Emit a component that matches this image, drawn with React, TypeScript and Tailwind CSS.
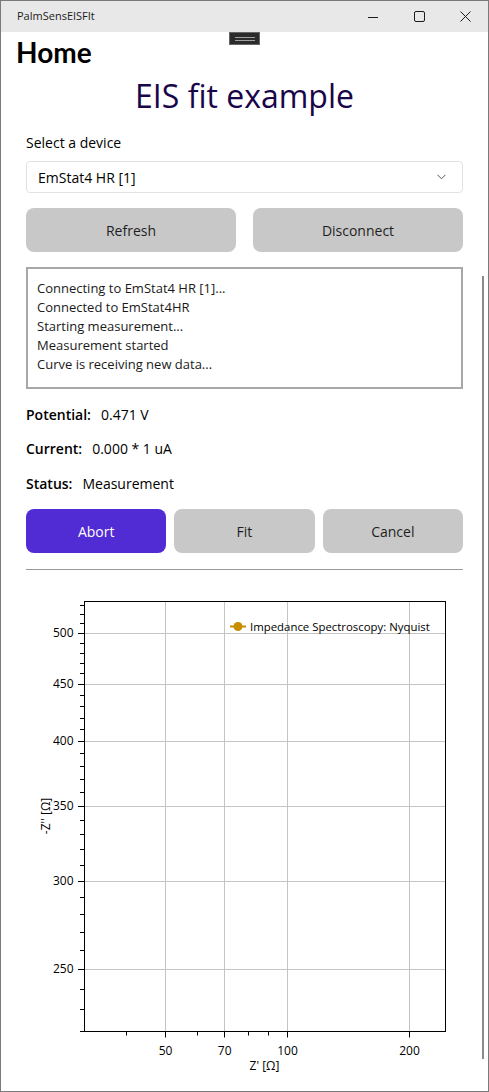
import React from "react";

const OX = 26;
const OY = 570;
const yv = (v: number) => 633 + 1116.2 * Math.log10(500 / v) - OY;
const xv = (v: number) => 287 + 405.3 * Math.log10(v / 100) - OX;
const L = 84 - OX + 0.5;
const R = 445 - OX + 0.5;
const T = 601 - OY + 0.5;
const B = 1031 - OY + 0.5;
const snap = (n: number) => Math.round(n) + 0.5;

const yMajor = [250, 300, 350, 400, 450, 500];
const yMinor: number[] = [];
for (let v = 220; v <= 530; v += 10) if (!yMajor.includes(v)) yMinor.push(v);
const xMajor = [50, 70, 100, 200];
const xMinor = [40, 60, 80, 90];

function Chart() {
  const font = "'Open Sans', sans-serif";
  return (
    <svg width={437} height={521} className="block" style={{ fontFamily: font }}>
      {/* grid */}
      {yMajor.map((v) => (
        <line key={"gy" + v} x1={L} x2={R} y1={snap(yv(v))} y2={snap(yv(v))} stroke="#c4c4c4" strokeWidth={1} />
      ))}
      {xMajor.map((v) => (
        <line key={"gx" + v} y1={T} y2={B} x1={snap(xv(v))} x2={snap(xv(v))} stroke="#c4c4c4" strokeWidth={1} />
      ))}
      {/* plot border */}
      <rect x={L} y={T} width={R - L} height={B - T} fill="none" stroke="#000" strokeWidth={1} />
      {/* y ticks */}
      {yMajor.map((v) => (
        <line key={"ty" + v} x1={L - 6.5} x2={L} y1={snap(yv(v))} y2={snap(yv(v))} stroke="#000" strokeWidth={1} />
      ))}
      {yMinor.map((v) => (
        <line key={"tym" + v} x1={L - 4.5} x2={L} y1={snap(yv(v))} y2={snap(yv(v))} stroke="#000" strokeWidth={1} />
      ))}
      {yMajor.map((v) => (
        <text key={"ly" + v} x={73.5 - OX} y={yv(v) + 4.3} textAnchor="end" fontSize={12} fill="#000">
          {v}
        </text>
      ))}
      {/* x ticks */}
      {xMajor.map((v) => (
        <line key={"tx" + v} y1={B} y2={B + 6} x1={snap(xv(v))} x2={snap(xv(v))} stroke="#000" strokeWidth={1} />
      ))}
      {xMinor.map((v) => (
        <line key={"txm" + v} y1={B} y2={B + 4} x1={snap(xv(v))} x2={snap(xv(v))} stroke="#000" strokeWidth={1} />
      ))}
      {xMajor.map((v) => (
        <text key={"lx" + v} x={xv(v) + 0.5} y={1054.5 - OY} textAnchor="middle" fontSize={12} fill="#000">
          {v}
        </text>
      ))}
      {/* axis titles */}
      <text x={264.5 - OX} y={1070 - OY} textAnchor="middle" fontSize={12} fill="#000">
        Z' [Ω]
      </text>
      <text
        x={0}
        y={0}
        transform={`translate(${50 - OX}, ${816 - OY}) rotate(-90)`}
        textAnchor="middle"
        fontSize={12}
        fill="#000"
      >
        -Z'' [Ω]
      </text>
      {/* legend */}
      <line x1={230 - OX} x2={246 - OX} y1={626.5 - OY} y2={626.5 - OY} stroke="#C88D00" strokeWidth={2} />
      <circle cx={238 - OX} cy={626.5 - OY} r={4.5} fill="#C88D00" />
      <text x={250 - OX} y={630.5 - OY} fontSize={11.4} fill="#000">
        Impedance Spectroscopy: Nyquist
      </text>
    </svg>
  );
}

function TitleBar() {
  return (
    <div className="h-[31px] shrink-0 bg-[#e8e8e8] flex items-center">
      <span className="ml-[16px] text-[11px] text-[#1b1b1b] font-['Open_Sans',sans-serif]">PalmSensEISFIt</span>
      <div className="ml-auto flex h-full">
        <div className="w-[46px] h-full flex items-center justify-center">
          <svg width="10" height="10" viewBox="0 0 10 10">
            <line x1="0" x2="10" y1="5.5" y2="5.5" stroke="#1b1b1b" strokeWidth="1" />
          </svg>
        </div>
        <div className="w-[46px] h-full flex items-center justify-center">
          <svg width="11" height="11" viewBox="0 0 11 11">
            <rect x="0.5" y="0.5" width="10" height="10" rx="1.5" fill="none" stroke="#1b1b1b" strokeWidth="1" />
          </svg>
        </div>
        <div className="w-[46px] h-full flex items-center justify-center">
          <svg width="11" height="11" viewBox="0 0 11 11">
            <path d="M0.5 0.5 L10.5 10.5 M10.5 0.5 L0.5 10.5" stroke="#1b1b1b" strokeWidth="1" />
          </svg>
        </div>
      </div>
    </div>
  );
}

export default function App() {
  return (
    <div className="w-[489px] h-[1092px] border border-[#7a7a7a] bg-white relative overflow-hidden flex flex-col font-['Open_Sans',sans-serif] text-black">
      <TitleBar />
      {/* grip */}
      <div className="absolute left-[228px] top-[31px] w-[31px] h-[13px] bg-[#2b2b2b] border border-[#666] flex flex-col items-center justify-center gap-[2px]">
        <div className="w-[20px] h-px bg-[#a0a0a0]" />
        <div className="w-[20px] h-px bg-[#a0a0a0]" />
      </div>
      {/* scrollbar */}
      <div className="absolute left-[481px] top-[275px] w-[2px] h-[783px] bg-[#8a8a8a]" />

      <div className="pl-[15px] h-[40px] leading-[40px] text-[28px] font-bold font-['Lato',sans-serif]">Home</div>

      <div className="px-[25px] flex flex-col">
        <div className="h-[48px] leading-[48px] text-[32px] text-center text-[#190649]">EIS fit example</div>
        <div className="mt-[13px] h-[20px] leading-[20px] text-[14px]">Select a device</div>
        <div className="mt-[8px] h-[32px] border border-[#e2e2e2] rounded-[4px] flex items-center pl-[11px] pr-[16px] text-[14px]">
          <span>EmStat4 HR [1]</span>
          <svg className="ml-auto" width="9" height="6" viewBox="0 0 9 6">
            <path d="M0.5 0.8 L4.5 4.8 L8.5 0.8" fill="none" stroke="#555" strokeWidth="1" />
          </svg>
        </div>
        <div className="mt-[15px] grid grid-cols-2 gap-[17px]">
          <div className="h-[44px] rounded-[8px] bg-[#c8c8c8] flex items-center justify-center text-[14px] text-[#1f1f1f]">Refresh</div>
          <div className="h-[44px] rounded-[8px] bg-[#c8c8c8] flex items-center justify-center text-[14px] text-[#1f1f1f]">Disconnect</div>
        </div>
        <div className="mt-[15px] h-[122px] border-2 border-[#a8a8a8] pt-[10px] pl-[9px] text-[13px] leading-[19px] text-[#1a1a1a]">
          <div>Connecting to EmStat4 HR [1]...</div>
          <div>Connected to EmStat4HR</div>
          <div>Starting measurement...</div>
          <div>Measurement started</div>
          <div>Curve is receiving new data...</div>
        </div>
        <div className="mt-[16px] h-[20px] leading-[20px] text-[14px] flex gap-[10px]">
          <span className="font-semibold">Potential:</span>
          <span>0.471 V</span>
        </div>
        <div className="mt-[14px] h-[20px] leading-[20px] text-[14px] flex gap-[10px]">
          <span className="font-semibold">Current:</span>
          <span>0.000 * 1 uA</span>
        </div>
        <div className="mt-[15px] h-[20px] leading-[20px] text-[14px] flex gap-[10px]">
          <span className="font-semibold">Status:</span>
          <span>Measurement</span>
        </div>
        <div className="mt-[15px] grid grid-cols-3 gap-[8px]">
          <div className="h-[44px] rounded-[8px] bg-[#512bd4] flex items-center justify-center text-[14px] text-white">Abort</div>
          <div className="h-[44px] rounded-[8px] bg-[#c8c8c8] flex items-center justify-center text-[14px] text-[#1f1f1f]">Fit</div>
          <div className="h-[44px] rounded-[8px] bg-[#c8c8c8] flex items-center justify-center text-[14px] text-[#1f1f1f]">Cancel</div>
        </div>
        <div className="mt-[16px] h-px bg-[#9a9a9a]" />
        <Chart />
      </div>
    </div>
  );
}
